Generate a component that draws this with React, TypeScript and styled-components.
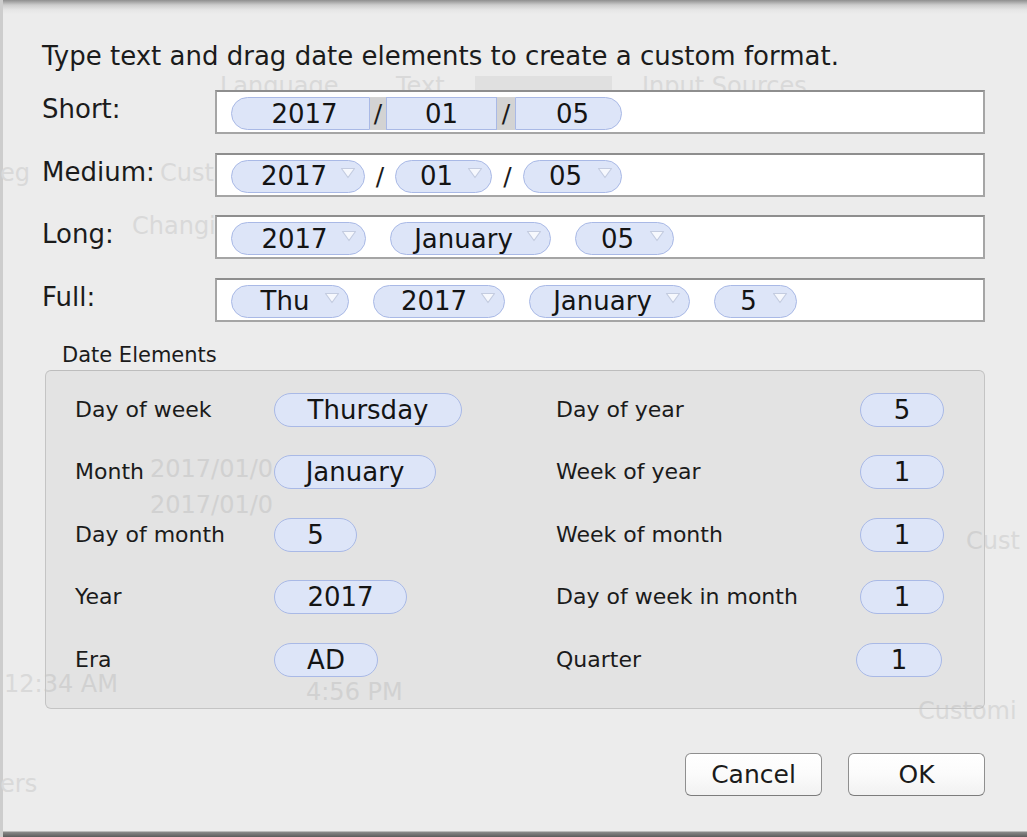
import React from "react";
import styled, { createGlobalStyle } from "styled-components";

const GlobalStyle = createGlobalStyle`
  html, body { margin: 0; padding: 0; background: #ececec; }
  body { font-family: "DejaVu Sans", "Liberation Sans", sans-serif; color: #1b1b1b; }
  * { box-sizing: border-box; }
`;

const Screen = styled.div`
  position: relative;
  width: 1027px;
  height: 837px;
  overflow: hidden;
  background: linear-gradient(
    to bottom,
    #8e8e8e 0px,
    #cdcdcd 5px,
    #e6e6e6 10px,
    #ececec 14px,
    #ececec 831px,
    #8a8a8a 832px,
    #5c5c5c 837px
  );
  box-shadow: inset 3px 0 0 #cdcdcd;
`;

/* ---------- window behind the sheet (seen through it) ---------- */
const BehindWindow = styled.div`
  position: absolute;
  inset: 0;
  pointer-events: none;
  color: #d9d9d9;
  font-size: 24px;
  line-height: 18px;
  white-space: nowrap;
`;

const GhostText = styled.span<{ $x: number; $y: number }>`
  position: absolute;
  left: ${(p) => p.$x}px;
  top: ${(p) => p.$y}px;
`;

const GhostTab = styled.span<{ $x: number; $y: number; $w: number }>`
  position: absolute;
  left: ${(p) => p.$x}px;
  top: ${(p) => p.$y}px;
  width: ${(p) => p.$w}px;
  height: 20px;
  background: #e0e0e0;
`;

/* ---------- sheet ---------- */
const Sheet = styled.div`
  position: relative;
  z-index: 1;
  display: flex;
  flex-direction: column;
  padding: 44px 42px 0 42px;
`;

const Title = styled.div`
  font-size: 26px;
  line-height: 24px;
  margin-bottom: 22px;
`;

const FormatGrid = styled.div`
  display: grid;
  grid-template-columns: 173px 770px;
  row-gap: 18.5px;
  align-items: start;
`;

const FieldLabel = styled.div`
  font-size: 26px;
  line-height: 28px;
  padding-top: 5px;
`;

const Field = styled.div`
  height: 44px;
  background: #ffffff;
  border: 2px solid #a5a5a5;
  border-top-color: #8e8e8e;
  display: flex;
  align-items: flex-start;
  padding: 5px 0 0 14px;
`;

type Shape = "pill" | "left" | "mid" | "right";

const radius = (s: Shape) =>
  s === "pill" ? "17px" : s === "left" ? "17px 0 0 17px" : s === "right" ? "0 17px 17px 0" : "0";

const Token = styled.div<{ $w: number; $shape?: Shape; $big?: boolean }>`
  width: ${(p) => p.$w}px;
  flex: none;
  height: ${(p) => (p.$big ? 34 : 33)}px;
  background: #dde5f8;
  border: 1.5px solid #a9b9e6;
  border-radius: ${(p) => radius(p.$shape || "pill")};
  display: flex;
  align-items: center;
  font-size: 26px;
  line-height: 30px;
  color: #141414;
`;

const TokenText = styled.span<{ $pad?: number }>`
  flex: 1;
  text-align: center;
  padding-left: ${(p) => p.$pad ?? 0}px;
`;

const ChevronBox = styled.svg`
  flex: none;
  width: 16px;
  height: 12px;
  margin: 0 8px 6px 6px;
`;

const Chevron = () => (
  <ChevronBox viewBox="0 0 16 12">
    <polygon points="1.5,1.5 14.5,1.5 8,10.5" fill="#f6f8fd" stroke="#c4cce0" strokeWidth="1.2" strokeLinejoin="round" />
  </ChevronBox>
);

const JoinSlash = styled.div<{ $w: number }>`
  width: ${(p) => p.$w}px;
  flex: none;
  height: 33px;
  background: #d3d3d3;
  font-size: 25px;
  line-height: 33px;
  text-align: center;
`;

const PlainSlash = styled.div<{ $w: number }>`
  width: ${(p) => p.$w}px;
  flex: none;
  height: 33px;
  font-size: 25px;
  line-height: 33px;
  text-align: center;
`;

const Gap = styled.div<{ $w: number }>`
  width: ${(p) => p.$w}px;
  flex: none;
`;

const GroupLabel = styled.div`
  font-size: 21px;
  line-height: 24px;
  margin: 21px 0 3px 20px;
`;

const GroupBox = styled.div`
  margin-left: 3px;
  width: 940px;
  height: 339px;
  border: 1.5px solid #c4c4c4;
  border-top-color: #bdbdbd;
  border-radius: 6px;
  background: rgba(0, 0, 0, 0.035);
  padding: 22px 0 0 29px;
  display: grid;
  grid-template-columns: 481px 1fr;
  grid-template-rows: repeat(5, 34px);
  grid-auto-flow: column;
  row-gap: 28.5px;
`;

const ElementRow = styled.div`
  display: flex;
  align-items: center;
`;

const ElementLabel = styled.div<{ $w: number }>`
  width: ${(p) => p.$w}px;
  flex: none;
  font-size: 22px;
  line-height: 24px;
`;

const ButtonBar = styled.div`
  display: flex;
  justify-content: flex-end;
  gap: 26px;
  margin-top: 44px;
`;

const Button = styled.button`
  width: 137px;
  height: 43px;
  font-family: inherit;
  font-size: 25px;
  color: #1b1b1b;
  background: linear-gradient(to bottom, #ffffff 0%, #fbfbfb 50%, #f1f1f1 100%);
  border: 1.5px solid #8f8f8f;
  border-bottom-color: #7c7c7c;
  border-radius: 6px;
  padding: 0;
`;

type Part =
  | { k: "tok"; t: string; w: number; shape?: Shape; chev?: boolean; pad?: number }
  | { k: "join"; w: number }
  | { k: "slash"; w: number }
  | { k: "gap"; w: number };

const formats: { label: string; parts: Part[] }[] = [
  {
    label: "Short:",
    parts: [
      { k: "tok", t: "2017", w: 139, shape: "left", pad: 8 },
      { k: "join", w: 16 },
      { k: "tok", t: "01", w: 111, shape: "mid" },
      { k: "join", w: 18 },
      { k: "tok", t: "05", w: 107, shape: "right", pad: 8 },
    ],
  },
  {
    label: "Medium:",
    parts: [
      { k: "tok", t: "2017", w: 134, chev: true, pad: 22 },
      { k: "slash", w: 30 },
      { k: "tok", t: "01", w: 97, chev: true, pad: 16 },
      { k: "slash", w: 31 },
      { k: "tok", t: "05", w: 99, chev: true, pad: 16 },
    ],
  },
  {
    label: "Long:",
    parts: [
      { k: "tok", t: "2017", w: 135, chev: true, pad: 22 },
      { k: "gap", w: 24 },
      { k: "tok", t: "January", w: 161, chev: true, pad: 16 },
      { k: "gap", w: 24 },
      { k: "tok", t: "05", w: 99, chev: true, pad: 16 },
    ],
  },
  {
    label: "Full:",
    parts: [
      { k: "tok", t: "Thu", w: 118, chev: true, pad: 20 },
      { k: "gap", w: 24 },
      { k: "tok", t: "2017", w: 132, chev: true, pad: 20 },
      { k: "gap", w: 24 },
      { k: "tok", t: "January", w: 161, chev: true, pad: 16 },
      { k: "gap", w: 24 },
      { k: "tok", t: "5", w: 83, chev: true, pad: 16 },
    ],
  },
];

const elements: { label: string; value: string; w: number; lw: number }[] = [
  { label: "Day of week", value: "Thursday", w: 188, lw: 199 },
  { label: "Month", value: "January", w: 162, lw: 199 },
  { label: "Day of month", value: "5", w: 83, lw: 199 },
  { label: "Year", value: "2017", w: 133, lw: 199 },
  { label: "Era", value: "AD", w: 104, lw: 199 },
  { label: "Day of year", value: "5", w: 84, lw: 304 },
  { label: "Week of year", value: "1", w: 84, lw: 304 },
  { label: "Week of month", value: "1", w: 84, lw: 304 },
  { label: "Day of week in month", value: "1", w: 84, lw: 304 },
  { label: "Quarter", value: "1", w: 86, lw: 300 },
];

const ghosts: { x: number; y: number; t: string }[] = [
  { x: 220, y: 77, t: "Language" },
  { x: 396, y: 77, t: "Text" },
  { x: 642, y: 77, t: "Input Sources" },
  { x: 0, y: 164, t: "eg" },
  { x: 160, y: 164, t: "Custo" },
  { x: 132, y: 217, t: "Changin" },
  { x: 150, y: 460, t: "2017/01/0" },
  { x: 150, y: 496, t: "2017/01/0" },
  { x: 966, y: 532, t: "Cust" },
  { x: 4, y: 675, t: "12:34 AM" },
  { x: 306, y: 683, t: "4:56 PM" },
  { x: 918, y: 702, t: "Customi" },
  { x: 0, y: 775, t: "ers" },
];

export default function App() {
  return (
    <>
      <GlobalStyle />
      <Screen>
        <BehindWindow>
          {ghosts.map((g, i) => (
            <GhostText key={i} $x={g.x} $y={g.y}>
              {g.t}
            </GhostText>
          ))}
          <GhostTab $x={475} $y={76} $w={137} />
        </BehindWindow>
        <Sheet>
          <Title>Type text and drag date elements to create a custom format.</Title>
          <FormatGrid>
            {formats.map((f) => (
              <React.Fragment key={f.label}>
                <FieldLabel>{f.label}</FieldLabel>
                <Field>
                  {f.parts.map((p, i) => {
                    if (p.k === "tok")
                      return (
                        <Token key={i} $w={p.w} $shape={p.shape}>
                          <TokenText $pad={p.pad}>{p.t}</TokenText>
                          {p.chev && <Chevron />}
                        </Token>
                      );
                    if (p.k === "join") return <JoinSlash key={i} $w={p.w}>/</JoinSlash>;
                    if (p.k === "slash") return <PlainSlash key={i} $w={p.w}>/</PlainSlash>;
                    return <Gap key={i} $w={p.w} />;
                  })}
                </Field>
              </React.Fragment>
            ))}
          </FormatGrid>
          <GroupLabel>Date Elements</GroupLabel>
          <GroupBox>
            {elements.map((e) => (
              <ElementRow key={e.label}>
                <ElementLabel $w={e.lw}>{e.label}</ElementLabel>
                <Token $w={e.w} $big>
                  <TokenText>{e.value}</TokenText>
                </Token>
              </ElementRow>
            ))}
          </GroupBox>
          <ButtonBar>
            <Button>Cancel</Button>
            <Button>OK</Button>
          </ButtonBar>
        </Sheet>
      </Screen>
    </>
  );
}
